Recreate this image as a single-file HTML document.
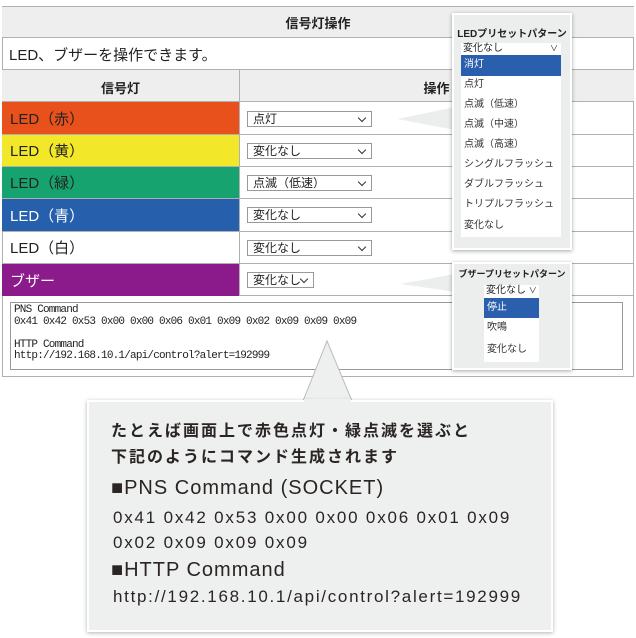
<!DOCTYPE html>
<html><head><meta charset="utf-8"><style>
*{box-sizing:border-box;margin:0;padding:0}
body{width:636px;height:638px;background:#fff;position:relative;overflow:hidden;font-family:"Liberation Sans","Noto Sans CJK JP",sans-serif;color:#222}
.a{position:absolute}
.row{position:absolute;left:2px;width:632px;border-bottom:1px solid #b0b0b0}
.cell{position:absolute;left:2px;width:237px;font-size:15px;padding-left:8px;display:flex;align-items:center}
.sel{position:absolute;left:247px;width:125px;height:16px;border:1px solid #999;background:#fff;font-size:12px;line-height:14px;padding-left:5px}
.sel:after{content:"";position:absolute;right:6px;top:3px;width:5px;height:5px;border-right:1.5px solid #333;border-bottom:1.5px solid #333;transform:rotate(45deg)}
.pop{position:absolute;background:#eceeee;border:2px solid #fff;box-shadow:0 1px 4px rgba(0,0,0,.35)}
.li{position:absolute;font-size:10px;padding-left:3px;line-height:20px;height:20px;color:#333}
.mono{font-family:"Liberation Mono","Noto Sans CJK JP",monospace}
</style></head><body>
<div class="a" style="left:2px;top:6px;width:632px;height:371px;border:1px solid #b0b0b0"></div>
<div class="row" style="top:6px;height:32px;background:#eeeeee;border-top:1px solid #b0b0b0"></div>
<div class="a" style="left:2px;width:632px;top:13px;text-align:center;font-size:13px;font-weight:bold">信号灯操作</div>
<div class="row" style="top:38px;height:32px"></div>
<div class="a" style="left:9px;top:44px;font-size:15px">LED、ブザーを操作できます。</div>
<div class="row" style="top:70px;height:32px;background:#eeeeee"></div>
<div class="a" style="left:2px;width:237px;top:78px;text-align:center;font-size:13px;font-weight:bold">信号灯</div>
<div class="a" style="left:239px;width:395px;top:78px;text-align:center;font-size:13px;font-weight:bold">操作</div>
<div class="a" style="left:239px;top:70px;width:1px;height:226px;background:#b0b0b0"></div>
<div class="row" style="top:102px;height:33px"></div>
<div class="row" style="top:135px;height:32px"></div>
<div class="row" style="top:167px;height:32px"></div>
<div class="row" style="top:199px;height:33px"></div>
<div class="row" style="top:232px;height:32px"></div>
<div class="row" style="top:264px;height:32px"></div>
<div class="cell" style="top:102px;height:32px;background:#e8501c">LED（赤）</div>
<div class="cell" style="top:135px;height:31px;background:#f2e829">LED（黄）</div>
<div class="cell" style="top:167px;height:31px;background:#17a36f">LED（緑）</div>
<div class="cell" style="top:199px;height:32px;background:#2660ad;color:#fff">LED（青）</div>
<div class="cell" style="top:232px;height:31px">LED（白）</div>
<div class="cell" style="top:264px;height:32px;background:#8b1a8a;color:#fff">ブザー</div>
<div class="sel" style="top:111px">点灯</div>
<div class="sel" style="top:143px">変化なし</div>
<div class="sel" style="top:175px">点滅（低速）</div>
<div class="sel" style="top:207px">変化なし</div>
<div class="sel" style="top:240px">変化なし</div>
<div class="sel" style="top:272px;width:67px">変化なし</div>
<div class="a mono" style="left:10px;top:302px;width:613px;height:68px;border:1px solid #999;font-size:11px;line-height:11.5px;letter-spacing:-0.8px;padding:2px 3px;white-space:pre;color:#222">PNS Command
0x41 0x42 0x53 0x00 0x00 0x06 0x01 0x09 0x02 0x09 0x09 0x09

HTTP Command
http://192.168.10.1/api/control?alert=192999</div>
<svg class="a" style="left:0;top:0" width="636" height="638">
<polygon points="455,106 392,119 455,131" fill="#eceeee" stroke="#fff" stroke-width="2"/>
<polygon points="455,273 394,284 455,293" fill="#eceeee" stroke="#fff" stroke-width="2"/>
<polygon points="303,401 327,341 352,401" fill="#eef0f0" stroke="#bbb" stroke-width="1"/>
</svg>
<div class="pop" style="left:452px;top:13px;width:120px;height:237px"></div>
<div class="a" style="left:452px;width:120px;top:25px;text-align:center;font-size:10px;font-weight:bold">LEDプリセットパターン</div>
<div class="a" style="left:461px;top:43px;width:100px;height:12px;background:#fff;font-size:10px;line-height:11px;padding-left:2px">変化なし<span style="position:absolute;right:3px;font-size:8px">∨</span></div>
<div class="a" style="left:461px;top:55px;width:100px;height:182px;background:#fff"></div>
<div class="li" style="left:461px;top:55px;width:100px;height:21px;background:#2a5fad;color:#fff">消灯</div>
<div class="li" style="left:461px;top:75px">点灯</div>
<div class="li" style="left:461px;top:95px">点滅（低速）</div>
<div class="li" style="left:461px;top:115px">点滅（中速）</div>
<div class="li" style="left:461px;top:135px">点滅（高速）</div>
<div class="li" style="left:461px;top:155px">シングルフラッシュ</div>
<div class="li" style="left:461px;top:175px">ダブルフラッシュ</div>
<div class="li" style="left:461px;top:195px">トリプルフラッシュ</div>
<div class="li" style="left:461px;top:216px">変化なし</div>
<div class="pop" style="left:452px;top:262px;width:120px;height:108px"></div>
<div class="a" style="left:452px;width:120px;top:267px;text-align:center;font-size:9px;font-weight:bold">ブザープリセットパターン</div>
<div class="a" style="left:484px;top:285px;width:55px;height:13px;background:#fff;font-size:10px;line-height:12px;padding-left:2px">変化なし <span style="font-size:8px">∨</span></div>
<div class="a" style="left:484px;top:298px;width:55px;height:64px;background:#fff"></div>
<div class="li" style="left:484px;top:298px;width:55px;background:#2a5fad;color:#fff">停止</div>
<div class="li" style="left:484px;top:318px">吹鳴</div>
<div class="li" style="left:484px;top:340px">変化なし</div>
<div class="a" style="left:87px;top:400px;width:466px;height:232px;background:#eef0f0;border:2px solid #fff;box-shadow:0 1px 4px rgba(0,0,0,.3)"></div>
<div class="a" style="left:304px;top:399px;width:47px;height:4px;background:#eef0f0"></div>
<div class="a" style="left:111px;top:419px;font-size:16px;font-weight:bold;line-height:26px;letter-spacing:2px;color:#2a2522;white-space:nowrap">たとえば画面上で赤色点灯・緑点滅を選ぶと<br>下記のようにコマンド生成されます</div>
<div class="a" style="left:111px;top:477px;font-size:20px;letter-spacing:1px;color:#2a2522;white-space:nowrap">■PNS Command (SOCKET)</div>
<div class="a" style="left:113px;top:505px;font-size:17px;line-height:25px;letter-spacing:1.8px;color:#2a2522;white-space:nowrap">0x41 0x42 0x53 0x00 0x00 0x06 0x01 0x09<br>0x02 0x09 0x09 0x09</div>
<div class="a" style="left:111px;top:559px;font-size:20px;letter-spacing:1px;color:#2a2522;white-space:nowrap">■HTTP Command</div>
<div class="a" style="left:113px;top:587px;font-size:17px;letter-spacing:1.7px;color:#2a2522;white-space:nowrap">http://192.168.10.1/api/control?alert=192999</div>
</body></html>
